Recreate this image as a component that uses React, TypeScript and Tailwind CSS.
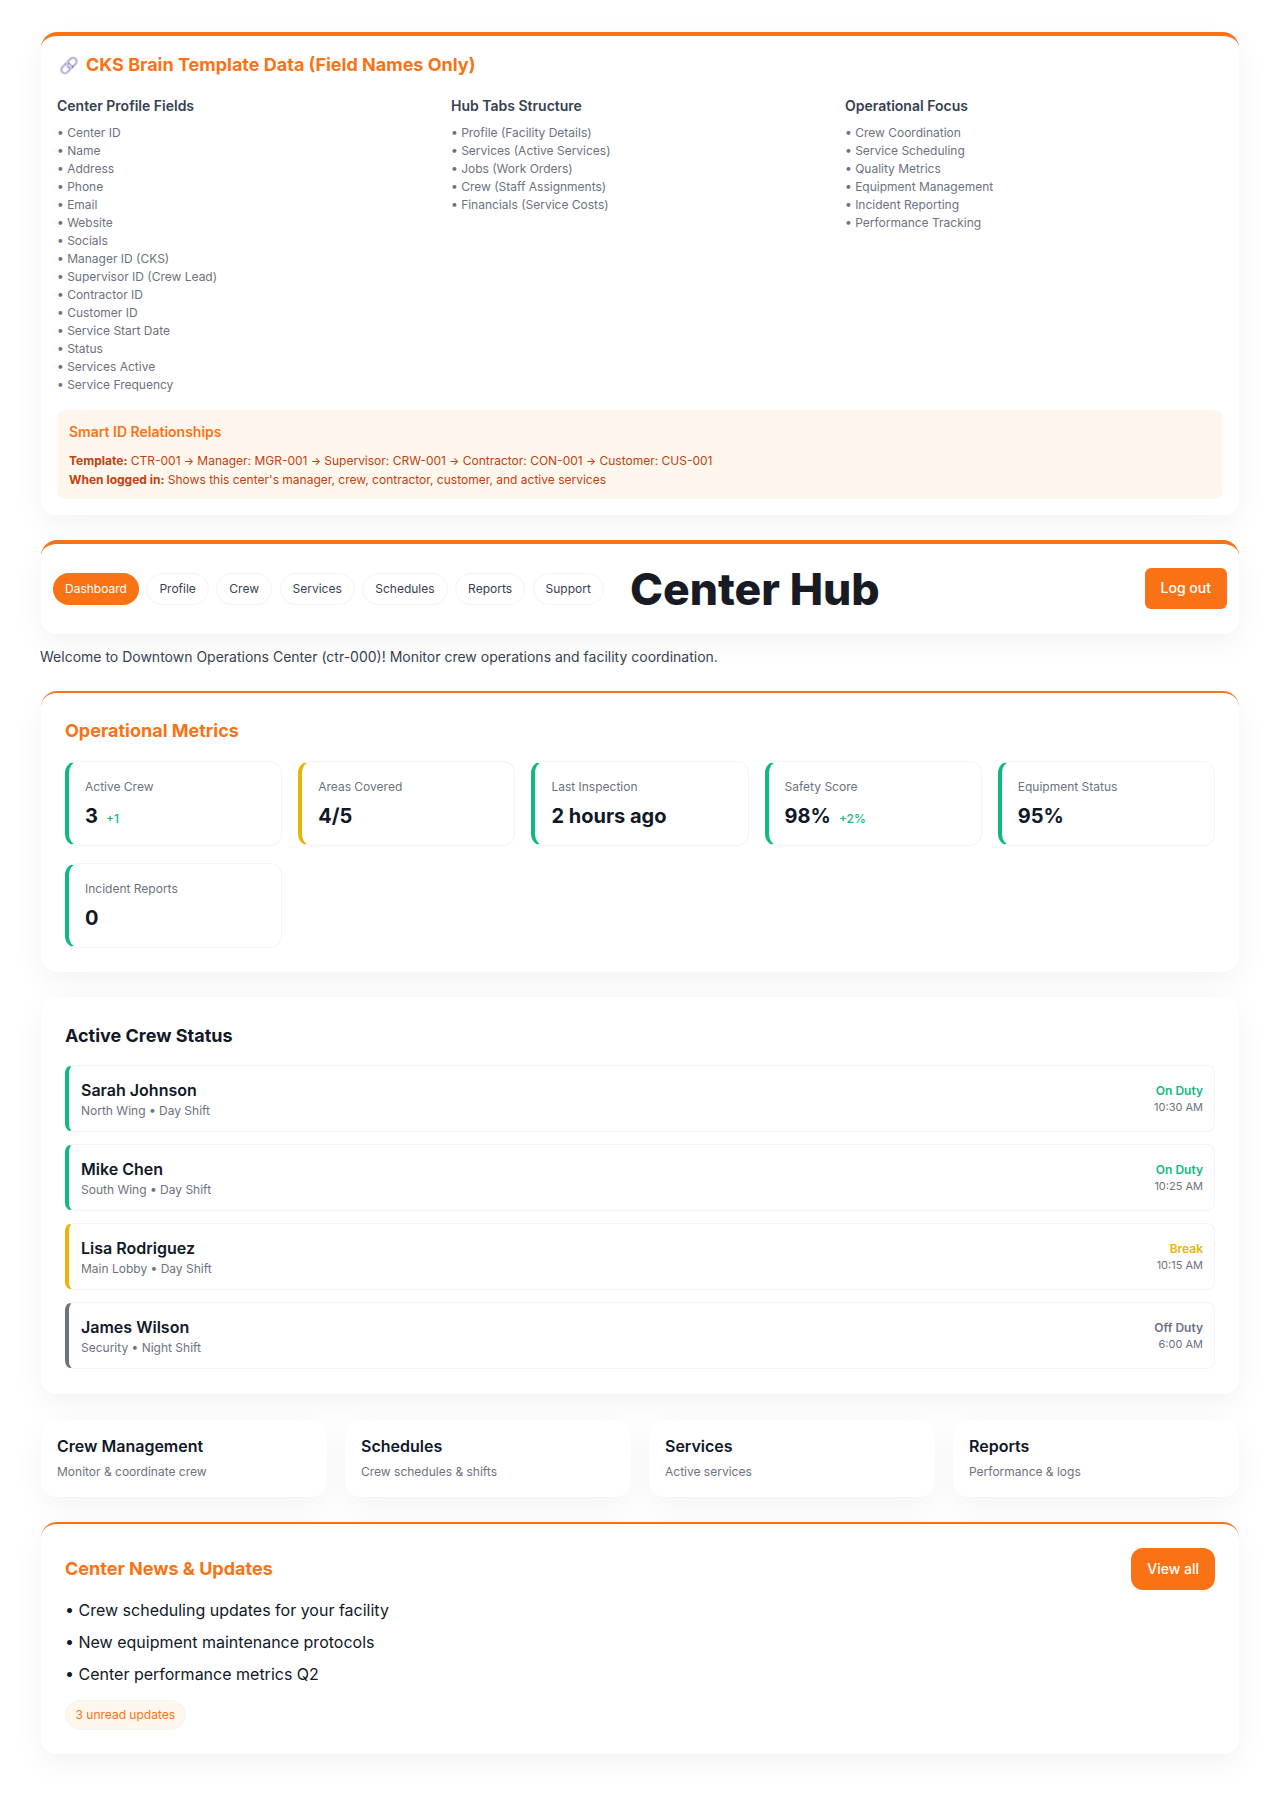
import React from "react";

const profileFields = ["Center ID", "Name", "Address", "Phone", "Email", "Website", "Socials", "Manager ID (CKS)", "Supervisor ID (Crew Lead)", "Contractor ID", "Customer ID", "Service Start Date", "Status", "Services Active", "Service Frequency"];
const hubTabs = ["Profile (Facility Details)", "Services (Active Services)", "Jobs (Work Orders)", "Crew (Staff Assignments)", "Financials (Service Costs)"];
const focus = ["Crew Coordination", "Service Scheduling", "Quality Metrics", "Equipment Management", "Incident Reporting", "Performance Tracking"];
const tabs = ["Profile", "Crew", "Services", "Schedules", "Reports", "Support"];
const cardShadow = "shadow-[0_10px_30px_rgba(0,0,0,0.05)]";

const Arrow = () => <span className="text-[10.5px] font-medium">→</span>;

const FieldList = ({ title, items }: { title: string; items: string[] }) => (
  <div>
    <h4 className="text-sm font-semibold text-[#374151] mb-2">{title}</h4>
    <div className="text-xs leading-[18px] text-[#6b7280]">
      {items.map((item) => (
        <div key={item}>• {item}</div>
      ))}
    </div>
  </div>
);

const Metric = ({ label, value, trend, border }: { label: string; value: string; trend?: string; border: string }) => (
  <div className={`bg-white rounded-xl border border-[#f3f4f6] border-l-4 pt-[17px] px-4 h-[85px] ${border}`}>
    <div className="text-xs leading-4 text-[#6b7280] mb-[7px]">{label}</div>
    <div className="flex items-baseline">
      <span className="text-xl leading-7 font-bold text-[#111827]">{value}</span>
      {trend && <span className="ml-2 text-xs font-medium text-[#10b981]">{trend}</span>}
    </div>
  </div>
);

const CrewRow = ({ name, sub, status, time, border, color }: { name: string; sub: string; status: string; time: string; border: string; color: string }) => (
  <div className={`flex items-center justify-between h-[67px] bg-white rounded-lg border border-[#f3f4f6] border-l-4 pl-3 pr-[11px] ${border}`}>
    <div>
      <div className="text-base leading-6 font-semibold text-[#111827]">{name}</div>
      <div className="text-xs leading-4 mt-px text-[#6b7280]">{sub}</div>
    </div>
    <div className="text-right pt-px">
      <div className={`text-xs leading-4 font-semibold ${color}`}>{status}</div>
      <div className="text-[11px] leading-4 text-[#6b7280]">{time}</div>
    </div>
  </div>
);

const QuickCard = ({ title, sub }: { title: string; sub: string }) => (
  <div className={`bg-white rounded-2xl h-[77px] px-4 pt-3.5 ${cardShadow}`}>
    <div className="text-base leading-6 font-semibold text-[#111827]">{title}</div>
    <div className="text-xs leading-4 mt-1.5 text-[#6b7280]">{sub}</div>
  </div>
);

export default function App() {
  return (
    <div className="min-h-[1795px] bg-white pl-[41px] pr-[26px] pt-8 pb-[41px] font-['Inter',sans-serif]">
      {/* Template data */}
      <section className={`bg-white rounded-2xl border-t-4 border-[#f97316] px-4 pt-[15px] pb-4 ${cardShadow}`}>
        <h3 className="text-lg leading-7 font-bold text-[#f97316] mb-[17px]">
          <span className="ml-[2px] mr-[7px] text-[16px] opacity-80 hue-rotate-60">🔗</span>CKS Brain Template Data (Field Names Only)
        </h3>
        <div className="grid grid-cols-3 gap-4">
          <FieldList title="Center Profile Fields" items={profileFields} />
          <FieldList title="Hub Tabs Structure" items={hubTabs} />
          <FieldList title="Operational Focus" items={focus} />
        </div>
        <div className="mt-4 bg-[#fff7ed] rounded-lg pt-3 px-3 pb-2.5">
          <h4 className="text-sm leading-5 font-semibold text-[#f97316] mb-2.5">Smart ID Relationships</h4>
          <div className="text-xs leading-[18px] text-[#c2410c]">
            <div><strong>Template:</strong> CTR-001 <Arrow /> Manager: MGR-001 <Arrow /> Supervisor: CRW-001 <Arrow /> Contractor: CON-001 <Arrow /> Customer: CUS-001</div>
            <div><strong>When logged in:</strong> Shows this center's manager, crew, contractor, customer, and active services</div>
          </div>
        </div>
      </section>

      {/* Header */}
      <header className={`mt-[25px] bg-white rounded-2xl border-t-4 border-[#f97316] h-[94px] flex items-center px-3 ${cardShadow}`}>
        <div className="flex gap-[7.5px]">
          <button className="h-8 px-3 rounded-full bg-[#f97316] text-white text-xs">Dashboard</button>
          {tabs.map((t) => (
            <button key={t} className="h-8 px-3 rounded-full bg-white border border-[#f3f4f6] text-[#374151] text-xs">{t}</button>
          ))}
        </div>
        <h1 className="ml-[26px] text-[44.5px] leading-[48px] font-extrabold text-[#191b24]">Center Hub</h1>
        <button className="ml-auto mb-0.5 h-[41px] px-4 rounded-md bg-[#f97316] text-white text-sm font-medium">Log out</button>
      </header>
      <p className="mt-[13px] -ml-px text-sm leading-5 text-[#374151]">Welcome to Downtown Operations Center (ctr-000)! Monitor crew operations and facility coordination.</p>

      {/* Metrics */}
      <section className={`mt-6 bg-white rounded-2xl border-t-2 border-[#f97316] p-6 ${cardShadow}`}>
        <h2 className="text-lg leading-7 font-bold text-[#f97316] mb-4">Operational Metrics</h2>
        <div className="grid grid-cols-5 gap-x-4 gap-y-[17px]">
          <Metric label="Active Crew" value="3" trend="+1" border="border-l-[#10b981]" />
          <Metric label="Areas Covered" value="4/5" border="border-l-[#eab308]" />
          <Metric label="Last Inspection" value="2 hours ago" border="border-l-[#10b981]" />
          <Metric label="Safety Score" value="98%" trend="+2%" border="border-l-[#10b981]" />
          <Metric label="Equipment Status" value="95%" border="border-l-[#10b981]" />
          <Metric label="Incident Reports" value="0" border="border-l-[#10b981]" />
        </div>
      </section>

      {/* Crew */}
      <section className={`mt-[25px] bg-white rounded-2xl px-6 pt-[25px] pb-[25px] ${cardShadow}`}>
        <h2 className="text-lg leading-7 font-bold text-[#111827] mb-[15px]">Active Crew Status</h2>
        <div className="flex flex-col gap-3">
          <CrewRow name="Sarah Johnson" sub="North Wing • Day Shift" status="On Duty" time="10:30 AM" border="border-l-[#10b981]" color="text-[#10b981]" />
          <CrewRow name="Mike Chen" sub="South Wing • Day Shift" status="On Duty" time="10:25 AM" border="border-l-[#10b981]" color="text-[#10b981]" />
          <CrewRow name="Lisa Rodriguez" sub="Main Lobby • Day Shift" status="Break" time="10:15 AM" border="border-l-[#eab308]" color="text-[#eab308]" />
          <CrewRow name="James Wilson" sub="Security • Night Shift" status="Off Duty" time="6:00 AM" border="border-l-[#6b7280]" color="text-[#6b7280]" />
        </div>
      </section>

      {/* Quick links */}
      <div className="mt-[26px] grid grid-cols-4 gap-[18px]">
        <QuickCard title="Crew Management" sub="Monitor & coordinate crew" />
        <QuickCard title="Schedules" sub="Crew schedules & shifts" />
        <QuickCard title="Services" sub="Active services" />
        <QuickCard title="Reports" sub="Performance & logs" />
      </div>

      {/* News */}
      <section className={`mt-[25px] bg-white rounded-2xl border-t-2 border-[#f97316] px-6 pt-6 pb-6 ${cardShadow}`}>
        <div className="flex items-center justify-between">
          <h2 className="text-lg leading-7 font-bold text-[#f97316]">Center News & Updates</h2>
          <button className="h-[42px] px-4 rounded-xl bg-[#f97316] text-white text-sm font-medium">View all</button>
        </div>
        <ul className="mt-1 text-base text-[#111827]">
          <li className="leading-8">• Crew scheduling updates for your facility</li>
          <li className="leading-8">• New equipment maintenance protocols</li>
          <li className="leading-8">• Center performance metrics Q2</li>
        </ul>
        <span className="mt-2.5 block w-fit rounded-full border border-[#f3f4f6] bg-[#fff7ed] px-[9.5px] py-1.5 text-xs text-[#f97316]">3 unread updates</span>
      </section>
    </div>
  );
}
